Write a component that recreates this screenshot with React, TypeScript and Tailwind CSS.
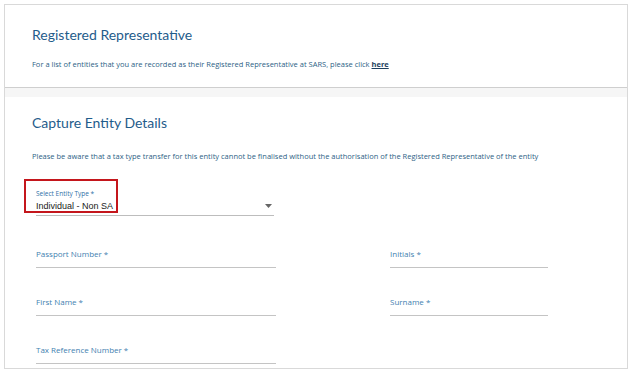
import React from 'react';

const LABEL = 'text-[8px] text-[#3f7fb0] leading-none';

function Field({ label, width }: { label: string; width: string }) {
  return (
    <div className={`${width} flex flex-col`}>
      <span className={LABEL}>{label}</span>
      <div className="mt-[9px] h-px bg-[#c4c4c4]" />
    </div>
  );
}

export default function App() {
  return (
    <div className="w-[632px] h-[373px] bg-white p-[4px] font-['Open_Sans',sans-serif]">
      <div className="h-[365px] border border-[#d9d9d9] flex flex-col overflow-hidden">
        <section className="shrink-0 h-[83px] border-b border-[#cfcfcf] px-[27px] pt-[20px]">
          <h1 className="font-['Lato',sans-serif] text-[14px] leading-[20px] text-[#1f5c8b]">Registered Representative</h1>
          <p className="mt-[14px] text-[7.5px] leading-[10px] text-[#2d5f86]">
            For a list of entities that you are recorded as their Registered Representative at SARS, please click{' '}
            <a className="underline font-bold text-[#1e3f5e]">here</a>
          </p>
        </section>
        <div className="shrink-0 h-[9px] bg-[#f6f6f6]" />
        <section className="flex-1 px-[27px] pt-[16px]">
          <h2 className="font-['Lato',sans-serif] text-[14px] leading-[20px] text-[#1f5c8b]">Capture Entity Details</h2>
          <p className="mt-[18px] text-[7.5px] leading-[10px] text-[#2d5f86]">
            Please be aware that a tax type transfer for this entity cannot be finalised without the authorisation of the Registered Representative of the entity
          </p>

          <div className="relative mt-[18px] w-[242px] h-[34px]">
            <div className="absolute left-[-8px] top-0 w-[94px] h-[34px] border-2 border-[#c4161c]" />
            <div className="pl-[4px] pt-[12px]">
              <span className="block text-[6.5px] leading-none text-[#2e6fa7]">Select Entity Type *</span>
              <div className="flex items-center justify-between pb-[3px] border-b border-[#bdbdbd] mt-[2px]">
                <span className="font-['Liberation_Sans',sans-serif] text-[9px] leading-[12px] text-[#222]">Individual - Non SA</span>
                <svg width="7" height="4" viewBox="0 0 7 4" className="mr-[2px]">
                  <path d="M0 0h7L3.5 4z" fill="#666" />
                </svg>
              </div>
            </div>
          </div>

          <div className="pl-[4px] mt-[37px] flex flex-col gap-[30px]">
            <div className="flex gap-[114px]">
              <Field label="Passport Number *" width="w-[240px]" />
              <Field label="Initials *" width="w-[158px]" />
            </div>
            <div className="flex gap-[114px]">
              <Field label="First Name *" width="w-[240px]" />
              <Field label="Surname *" width="w-[158px]" />
            </div>
            <div className="flex">
              <Field label="Tax Reference Number *" width="w-[240px]" />
            </div>
          </div>
        </section>
      </div>
    </div>
  );
}
